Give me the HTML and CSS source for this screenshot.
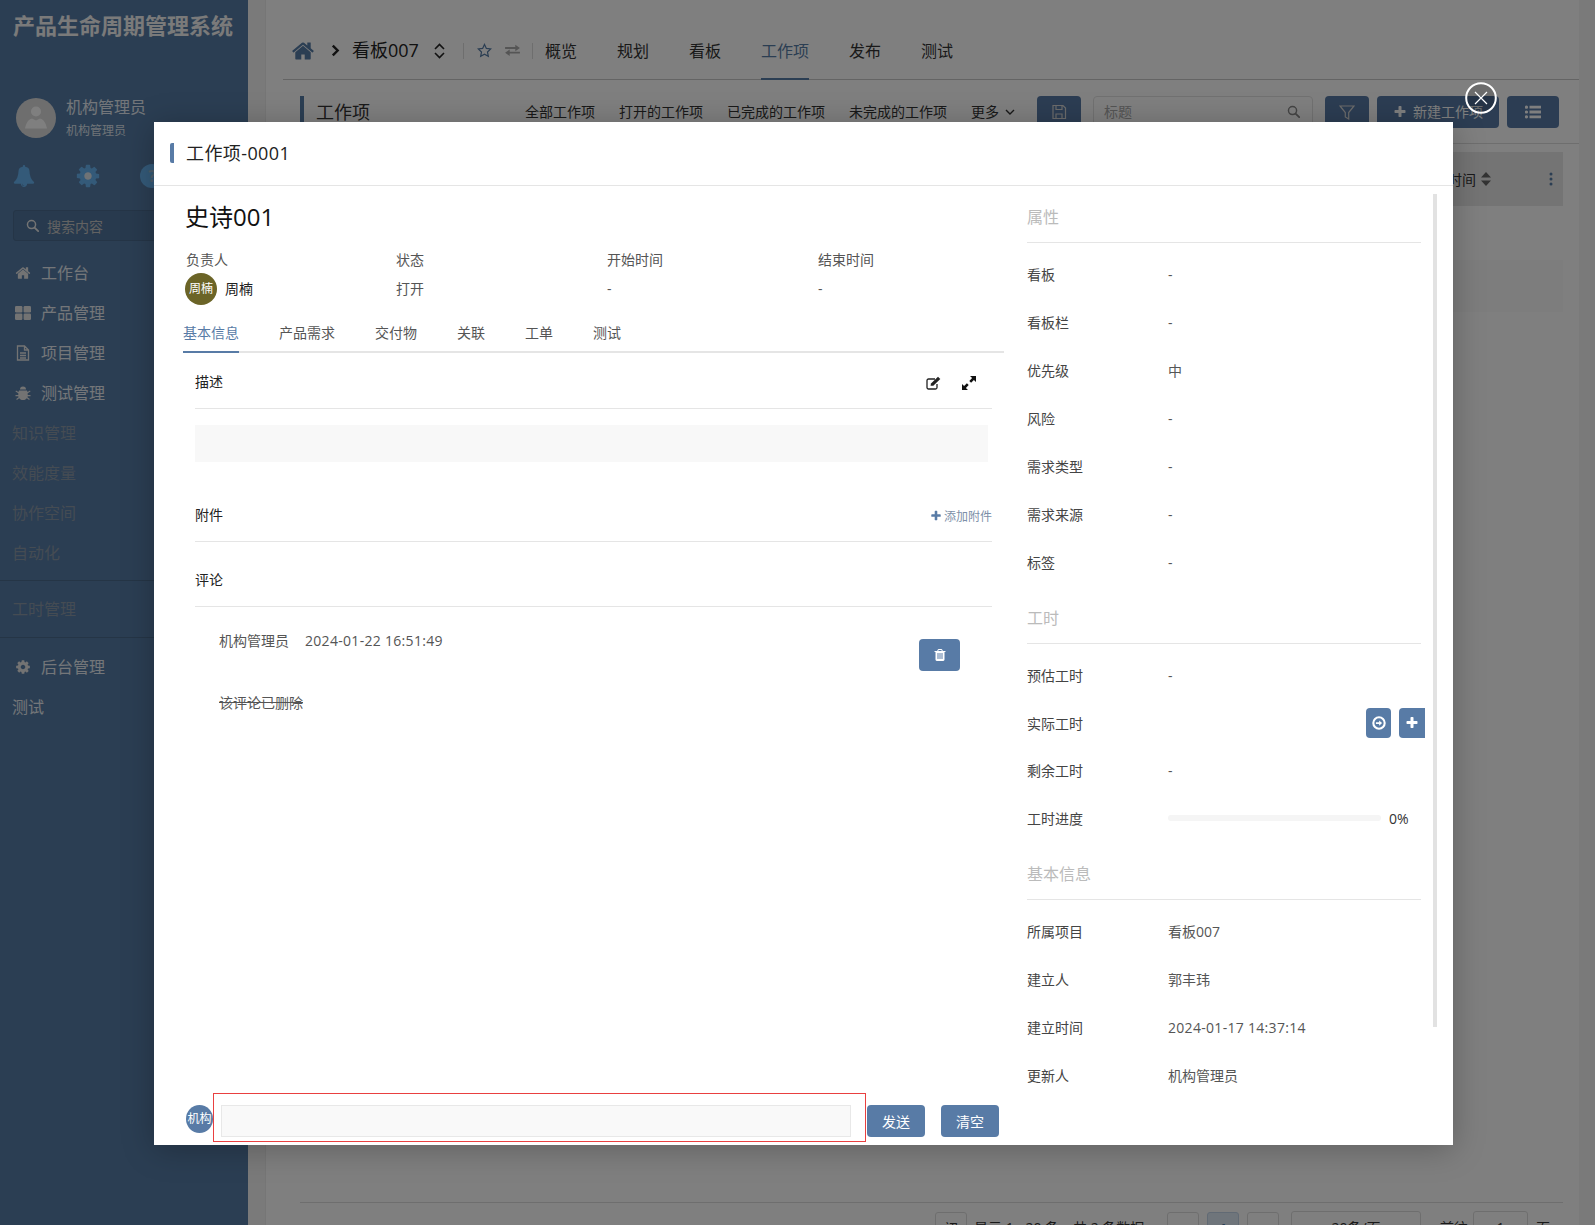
FILE: index.html
```html
<!DOCTYPE html>
<html lang="zh-CN">
<head>
<meta charset="utf-8">
<title>工作项-0001</title>
<link rel="stylesheet" href="styles.css">
</head>
<body>
<svg class="defs" aria-hidden="true">
  <symbol id="i-home" viewBox="0 0 1792 1792"><path d="M1472 992v480q0 26-19 45t-45 19h-384v-384h-256v384h-384q-26 0-45-19t-19-45v-480q0-1 .5-3t.5-3l575-474 575 474q1 2 1 6zm223-69l-62 74q-8 9-21 11h-3q-13 0-21-7l-692-577-692 577q-12 8-24 7-13-2-21-11l-62-74q-8-10-7-23.500t11-21.500l719-599q32-26 76-26t76 26l244 204v-195q0-14 9-23t23-9h192q14 0 23 9t9 23v408l219 182q10 8 11 21.500t-7 23.500z"/></symbol>
  <symbol id="i-cog" viewBox="0 0 1792 1792"><path d="M1152 896q0-106-75-181t-181-75-181 75-75 181 75 181 181 75 181-75 75-181zm512-109v222q0 12-8 23t-20 13l-185 28q-19 54-39 91 35 50 107 138 10 12 10 25t-9 23q-27 37-99 108t-94 71q-12 0-26-9l-138-108q-44 23-91 38-16 136-29 186-7 28-36 28h-222q-14 0-24.500-8.500t-11.500-21.500l-28-184q-49-16-90-37l-141 107q-10 9-25 9-14 0-25-11-126-114-165-168-7-10-7-23 0-12 8-23 15-21 51-66.500t54-70.500q-27-50-41-99l-183-27q-13-2-21-12.500t-8-23.500v-222q0-12 8-23t19-13l186-28q14-46 39-92-40-57-107-138-10-12-10-24 0-10 9-23 26-36 98.500-107.500t94.500-71.500q13 0 26 10l138 107q44-23 91-38 16-136 29-186 7-28 36-28h222q14 0 24.500 8.500t11.500 21.500l28 184q49 16 90 37l142-107q9-9 24-9 13 0 25 10 129 119 165 170 7 8 7 22 0 12-8 23-15 21-51 66.500t-54 70.500q26 50 41 98l183 28q13 2 21 12.500t8 23.500z"/></symbol>
  <symbol id="i-bell" viewBox="0 0 1792 1792"><path d="M912 1696q0-16-16-16-59 0-101.500-42.500t-42.500-101.500q0-16-16-16t-16 16q0 73 51.500 124.500t124.500 51.500q16 0 16-16zm816-288q0 52-38 90t-90 38h-448q0 106-75 181t-181 75-181-75-75-181h-448q-52 0-90-38t-38-90q190-161 287-397.500t97-498.500q0-165 96-262t264-117q-8-18-8-37 0-40 28-68t68-28 68 28 28 68q0 19-8 37 168 20 264 117t96 262q0 262 97 498.500t287 397.500z"/></symbol>
  <symbol id="i-plus" viewBox="0 0 1792 1792"><path d="M1600 736v192q0 40-28 68t-68 28h-416v416q0 40-28 68t-68 28h-192q-40 0-68-28t-28-68v-416h-416q-40 0-68-28t-28-68v-192q0-40 28-68t68-28h416v-416q0-40 28-68t68-28h192q40 0 68 28t28 68v416h416q40 0 68 28t28 68z"/></symbol>
  <symbol id="i-trash" viewBox="0 0 1792 1792"><path d="M704 1376v-704q0-14-9-23t-23-9h-64q-14 0-23 9t-9 23v704q0 14 9 23t23 9h64q14 0 23-9t9-23zm256 0v-704q0-14-9-23t-23-9h-64q-14 0-23 9t-9 23v704q0 14 9 23t23 9h64q14 0 23-9t9-23zm256 0v-704q0-14-9-23t-23-9h-64q-14 0-23 9t-9 23v704q0 14 9 23t23 9h64q14 0 23-9t9-23zm-544-992h448l-48-117q-7-9-17-11h-317q-10 2-17 11zm928 32v64q0 14-9 23t-23 9h-96v948q0 83-47 143.500t-113 60.500h-832q-66 0-113-58.500t-47-141.500v-952h-96q-14 0-23-9t-9-23v-64q0-14 9-23t23-9h309l70-167q15-37 54-63t79-26h320q40 0 79 26t54 63l70 167h309q14 0 23 9t9 23z"/></symbol>
  <symbol id="i-search" viewBox="0 0 16 16"><circle cx="6.800" cy="6.800" r="5" fill="none" stroke="currentColor" stroke-width="1.800"/><path d="M10.500 10.500 15 15" stroke="currentColor" stroke-width="2.200" stroke-linecap="round"/></symbol>
</svg>

<div class="page">
  <aside class="sidebar">
    <h1 class="brand">产品生命周期管理系统</h1>
    <div class="user">
      <svg class="user-avatar" viewBox="0 0 40 40"><circle cx="20" cy="20" r="20" fill="#dcdcdc"/><circle cx="20" cy="13.500" r="5" fill="#fff"/><path d="M9 30.500c1-5 3-9 7-10l4 2 4-2c4 1 6 5 7 10z" fill="#fff"/></svg>
      <div>
        <div class="user-name">机构管理员</div>
        <div class="user-role">机构管理员</div>
      </div>
    </div>
    <div class="quick">
      <svg class="quick-bell"><use href="#i-bell"/></svg>
      <svg class="quick-cog" viewBox="0 0 1792 1792"><circle cx="896" cy="896" r="300" fill="#dfe6ec"/><use href="#i-cog" width="1792" height="1792"/></svg>
      <span class="quick-help">?</span>
    </div>
    <div class="side-search">
      <svg class="side-search-icon"><use href="#i-search"/></svg>
      <span>搜索内容</span>
    </div>
    <nav class="menu">
      <a class="menu-item"><svg class="menu-icon"><use href="#i-home"/></svg>工作台</a>
      <a class="menu-item"><svg class="menu-icon" viewBox="0 0 16 14"><rect width="7.400" height="6.400" rx="1.200"/><rect x="8.600" width="7.400" height="6.400" rx="1.200"/><rect y="7.600" width="7.400" height="6.400" rx="1.200"/><rect x="8.600" y="7.600" width="7.400" height="6.400" rx="1.200"/></svg>产品管理</a>
      <a class="menu-item"><svg class="menu-icon" viewBox="0 0 16 16"><path d="M2.500 1h7l4 4v10h-11zM9.500 1v4h4M5 8h6M5 10.500h6M5 13h6" fill="none" stroke="currentColor" stroke-width="1.300"/></svg>项目管理</a>
      <a class="menu-item"><svg class="menu-icon" viewBox="0 0 16 16"><path d="M5 4.500a3 3 0 0 1 6 0zM4 5.500h8l.5 1.500L15 5.500l.5 1-2.800 1.800V10H15.500v1.200h-2.800l-.2 1 2.300 1.800-.7 1-2.300-1.800C10.800 14.500 9.500 15 8 15s-2.800-.5-3.800-1.800L1.900 15l-.7-1 2.300-1.800-.2-1H.5V10h2.800V8.300L.5 6.500l.5-1L3.500 7z"/></svg>测试管理</a>
      <a class="menu-item is-off">知识管理</a>
      <a class="menu-item is-off">效能度量</a>
      <a class="menu-item is-off">协作空间</a>
      <a class="menu-item is-off">自动化</a>
      <div class="menu-sep"></div>
      <a class="menu-item is-off menu-item-solo">工时管理</a>
      <div class="menu-sep menu-sep-b"></div>
      <a class="menu-item menu-item-after"><svg class="menu-icon"><use href="#i-cog"/></svg>后台管理</a>
      <a class="menu-item is-plain">测试</a>
    </nav>
  </aside>

  <main class="main">
    <div class="panel">
      <header class="topbar">
        <svg class="top-home"><use href="#i-home"/></svg>
        <svg class="top-chev" viewBox="0 0 8 12"><path d="M1.500 1.500 6 6l-4.500 4.500" fill="none" stroke="currentColor" stroke-width="2.200"/></svg>
        <span class="top-board">看板007</span>
        <svg class="top-updown" viewBox="0 0 12 16"><path d="M1.500 6 6 1.500 10.500 6M1.500 10 6 14.500 10.500 10" fill="none" stroke="currentColor" stroke-width="1.600"/></svg>
        <span class="top-div"></span>
        <svg class="top-star" viewBox="0 0 16 16"><path d="m8 1.500 2 4.300 4.600.6-3.400 3.200.9 4.700L8 12l-4.100 2.300.9-4.700L1.400 6.400 6 5.800z" fill="none" stroke="currentColor" stroke-width="1.300"/></svg>
        <svg class="top-swap" viewBox="0 0 16 14"><path d="M0 3.500h11V1l5 3.500-5 3.500V5.500H0zM16 8.500H5V6L0 9.500 5 13v-2.500h11z" transform="translate(0 -.2)"/></svg>
        <span class="top-div top-div-b"></span>
        <nav class="top-tabs">
          <a class="top-tab">概览</a>
          <a class="top-tab">规划</a>
          <a class="top-tab">看板</a>
          <a class="top-tab is-active">工作项</a>
          <a class="top-tab">发布</a>
          <a class="top-tab">测试</a>
        </nav>
      </header>

      <div class="toolbar">
        <h2 class="page-title">工作项</h2>
        <div class="views">
          <a>全部工作项</a><a>打开的工作项</a><a>已完成的工作项</a><a>未完成的工作项</a>
          <a class="views-more">更多<svg class="more-chev" viewBox="0 0 10 6"><path d="M1 1l4 4 4-4" fill="none" stroke="currentColor" stroke-width="1.400"/></svg></a>
        </div>
        <button class="btn btn-icon"><svg class="btn-svg" viewBox="0 0 16 16"><path d="M2 1.500h10l2.500 2.500v10.500H2zM5 1.500v4h6v-4M5 14.500V10h6v4.500" fill="none" stroke="currentColor" stroke-width="1.200"/></svg></button>
        <div class="search"><span class="search-ph">标题</span><svg class="search-icon"><use href="#i-search"/></svg></div>
        <button class="btn btn-icon"><svg class="btn-svg" viewBox="0 0 16 16"><path d="M1 2h14L9.700 8.500V15l-3.400-2V8.500z" fill="none" stroke="currentColor" stroke-width="1.200"/></svg></button>
        <button class="btn btn-new"><svg class="btn-plus"><use href="#i-plus"/></svg><span class="btn-new-text">新建工作项</span></button>
        <button class="btn btn-list"><svg class="btn-svg btn-svg-list" viewBox="0 0 16 14"><path d="M4.500 .8H16v2.800H4.500zM4.500 5.600H16v2.800H4.500zM4.500 10.400H16v2.800H4.500z"/><circle cx="1.500" cy="2.200" r="1.600"/><circle cx="1.500" cy="7" r="1.600"/><circle cx="1.500" cy="11.800" r="1.600"/></svg></button>
      </div>

      <div class="content">
        <div class="thead">
          <span class="thead-text">更新时间</span>
          <svg class="sort" viewBox="0 0 10 14"><path d="M5 0l5 5.500H0zM5 14l5-5.500H0z"/></svg>
          <svg class="kebab" viewBox="0 0 4 14"><circle cx="2" cy="2" r="1.500"/><circle cx="2" cy="7" r="1.500"/><circle cx="2" cy="12" r="1.500"/></svg>
        </div>
        <div class="trow"></div>
        <footer class="pager">
          <span class="pg-box pg-first">初</span>
          <span class="pg-info">显示 1 - 20 条，共 2 条数据</span>
          <span class="pg-box">‹</span>
          <span class="pg-box is-current">1</span>
          <span class="pg-box">›</span>
          <span class="pg-select">20条/页</span>
          <span class="pg-go">前往</span>
          <span class="pg-input">1</span>
          <span class="pg-unit">页</span>
        </footer>
      </div>
    </div>
  </main>
</div>

<div class="overlay"></div>

<section class="modal">
  <header class="modal-head"><h2 class="modal-title">工作项-0001</h2></header>
  <div class="modal-body">
    <div class="detail">
      <h3 class="detail-title">史诗001</h3>
      <div class="facts">
        <div class="fact-label">负责人</div><div class="fact-label">状态</div><div class="fact-label">开始时间</div><div class="fact-label">结束时间</div>
        <div class="fact-value fact-owner"><span class="owner-avatar">周楠</span><span class="owner-name">周楠</span></div>
        <div class="fact-value">打开</div><div class="fact-value">-</div><div class="fact-value">-</div>
      </div>
      <nav class="tabs">
        <a class="tab is-active">基本信息</a><a class="tab">产品需求</a><a class="tab">交付物</a><a class="tab">关联</a><a class="tab">工单</a><a class="tab">测试</a>
      </nav>
      <div class="sections">
        <div class="sec-head">
          <span>描述</span>
          <span class="sec-tools">
            <svg class="tool" viewBox="0 0 16 14"><path d="M11 8v3.500a1.500 1.500 0 0 1-1.500 1.500h-7A1.500 1.500 0 0 1 1 11.500v-7A1.500 1.500 0 0 1 2.500 3H9" fill="none" stroke="#222" stroke-width="1.300"/><path d="M4.500 9.800 5 7.500 12 .7l2.300 2.300-7 6.800z" fill="#222"/></svg>
            <svg class="tool tool-b" viewBox="0 0 14 14"><path d="M8 0h6v6l-2.100-2.100-2.800 2.800-1.800-1.800 2.800-2.800zM6 14H0V8l2.100 2.100 2.800-2.800 1.800 1.800-2.800 2.800z" fill="#111"/></svg>
          </span>
        </div>
        <div class="desc-box"></div>
        <div class="sec-head sec-attach">
          <span>附件</span>
          <a class="add-link"><svg class="add-plus"><use href="#i-plus"/></svg>添加附件</a>
        </div>
        <div class="sec-head sec-comment"><span>评论</span></div>
        <article class="comment">
          <div class="comment-main">
            <div class="comment-meta"><span>机构管理员</span><span class="latin-wide">2024-01-22 16:51:49</span></div>
            <div class="comment-text">该评论已删除</div>
          </div>
          <button class="btn-del"><svg class="del-icon"><use href="#i-trash"/></svg></button>
        </article>
      </div>
      <div class="reply">
        <span class="reply-avatar">机构</span>
        <div class="reply-frame"><div class="reply-input"></div></div>
        <button class="btn-reply">发送</button>
        <button class="btn-reply btn-clear">清空</button>
      </div>
    </div>

    <aside class="attrs">
      <h4 class="attr-title">属性</h4>
      <div class="attr-list">
        <div class="attr"><span class="attr-k">看板</span><span>-</span></div>
        <div class="attr"><span class="attr-k">看板栏</span><span>-</span></div>
        <div class="attr"><span class="attr-k">优先级</span><span>中</span></div>
        <div class="attr"><span class="attr-k">风险</span><span>-</span></div>
        <div class="attr"><span class="attr-k">需求类型</span><span>-</span></div>
        <div class="attr"><span class="attr-k">需求来源</span><span>-</span></div>
        <div class="attr"><span class="attr-k">标签</span><span>-</span></div>
      </div>
      <h4 class="attr-title attr-title-next">工时</h4>
      <div class="attr-list">
        <div class="attr"><span class="attr-k">预估工时</span><span>-</span></div>
        <div class="attr attr-tight"><span class="attr-k">实际工时</span>
          <span class="hour-btns">
            <button class="hour-btn"><svg viewBox="0 0 16 16" class="hour-svg"><circle cx="8" cy="8" r="6.500" fill="none" stroke="currentColor" stroke-width="2.400"/><path d="M4.500 7h3.700V5l3.300 3-3.300 3V9H4.500z" fill="currentColor"/></svg></button>
            <button class="hour-btn hour-btn-cut"><svg class="hour-svg"><use href="#i-plus"/></svg></button>
          </span>
        </div>
        <div class="attr"><span class="attr-k">剩余工时</span><span>-</span></div>
        <div class="attr"><span class="attr-k">工时进度</span><span class="bar"></span><span class="bar-val">0%</span></div>
      </div>
      <h4 class="attr-title attr-title-next">基本信息</h4>
      <div class="attr-list">
        <div class="attr"><span class="attr-k">所属项目</span><span>看板007</span></div>
        <div class="attr"><span class="attr-k">建立人</span><span>郭丰玮</span></div>
        <div class="attr"><span class="attr-k">建立时间</span><span class="latin-wide">2024-01-17 14:37:14</span></div>
        <div class="attr"><span class="attr-k">更新人</span><span>机构管理员</span></div>
      </div>
    </aside>
    <div class="scroll-thumb"></div>
  </div>
</section>

<button class="modal-close"><svg viewBox="0 0 32 32" class="close-svg"><circle cx="16" cy="16" r="14.800" fill="rgba(0,0,0,.15)" stroke="#fff" stroke-width="2"/><path d="M10 10l12 12M22 10 10 22" stroke="#fff" stroke-width="1.200"/></svg></button>
</body>
</html>
```

FILE: styles.css
```css
* { box-sizing: border-box; }
html, body { margin: 0; height: 100%; overflow: hidden; }
body {
  font-family: "Open Sans", "Noto Sans CJK SC", sans-serif;
  font-size: 14px;
  color: #333;
  background: #fff;
}
h1, h2, h3, h4 { margin: 0; font-weight: 400; }
button { font-family: inherit; border: 0; padding: 0; }
svg { fill: currentColor; display: block; }
.defs { position: absolute; width: 0; height: 0; }

.page { display: flex; height: 1225px; overflow: hidden; }

/* sidebar */
.sidebar { width: 248px; flex: none; background: #567ca6; color: #ffffff; overflow: hidden; }
.brand { font-size: 22px; font-weight: 700; line-height: 30px; padding: 10px 0 0 13px; color: #f4f4f4; white-space: nowrap; }
.user { display: flex; align-items: center; gap: 10px; margin: 57px 0 0 16px; }
.user-avatar { width: 40px; height: 40px; }
.user-name { font-size: 16px; line-height: 20px; color: #e6edf4; }
.user-role { font-size: 12px; line-height: 16px; margin-top: 6px; color: #dfe6ee; }
.quick { display: flex; align-items: center; margin: 24px 0 0 14px; }
.quick-bell { width: 22px; height: 24px; color: #68b4f2; margin-left: -1px; }
.quick-cog { width: 26px; height: 26px; color: #68b4f2; margin-left: 40px; }
.quick-help { width: 24px; height: 24px; border-radius: 50%; background: #68b4f2; color: #9cbcd8; margin-left: 39px; text-align: center; line-height: 24px; font-weight: 700; font-size: 16px; }
.side-search { display: flex; align-items: center; gap: 8px; height: 31px; margin: 21px 0 0 13px; padding-left: 12px; background: #51759c; border: 1px solid #4a6a8e; border-radius: 3px; color: #c4c4c4; font-size: 14px; }
.side-search-icon { width: 13px; height: 13px; color: #e8e8e8; }
.menu { margin-top: 12px; }
.menu-item { display: flex; align-items: center; height: 40px; padding: 0 0 3px 15px; font-size: 16px; color: #e8edf2; }
.menu-icon { width: 16px; height: 16px; margin: 2px 10px 0 0; flex: none; color: #e6e6e6; }
.menu-item.is-off { padding-left: 12px; color: #8a98a6; }
.menu-item-solo { margin-top: 9px; height: 38px; }
.menu-item-after { margin-top: 9px; }
.menu-item.is-plain { padding-left: 12px; }
.menu-sep { height: 1px; background: #4b6a8d; margin-top: 7px; }
.menu-sep-b { margin-top: 9px; }

/* main behind the dialog */
.main { flex: 1; min-width: 0; padding: 0 16px 0 17px; background: #f4f4f4; overflow: hidden; }
.panel { background: #fff; height: 100%; border-left: 1px solid #ececec; }
.topbar { display: flex; align-items: center; height: 80px; padding: 22px 0 0 8px; margin-left: 17px; border-bottom: 1px solid #c8c8c8; color: #222; }
.top-home { width: 24px; height: 24px; color: #567ca6; }
.top-chev { width: 9px; height: 13px; margin-left: 16px; color: #222; }
.top-board { font-size: 18px; margin-left: 12px; margin-bottom: 4px; width: 67px; white-space: nowrap; }
.top-updown { width: 13px; height: 16px; margin-left: 14px; color: #222; }
.top-div { width: 1px; height: 16px; background: #ddd; margin-left: 17px; }
.top-star { width: 15px; height: 15px; margin-left: 13px; color: #567ca6; }
.top-swap { width: 15px; height: 13px; margin-left: 13px; color: #aaa; }
.top-div-b { margin-left: 12px; }
.top-tabs { display: flex; gap: 40px; margin-left: 12px; align-self: stretch; }
.top-tab { font-size: 16px; display: flex; align-items: center; color: #333; border-bottom: 2px solid transparent; margin-bottom: -1px; }
.top-tab.is-active { color: #567ca6; border-bottom-color: #567ca6; }

.toolbar { display: flex; align-items: center; height: 64px; margin-left: 17px; padding: 0 20px 0 17px; border-bottom: 1px solid #ddd; }
.page-title { font-size: 18px; padding-left: 12px; border-left: 4px solid #567ca6; line-height: 32px; color: #333; margin-top: 0; }
.views { display: flex; align-items: center; gap: 24px; margin: -2px 22px 0 auto; font-size: 14px; color: #333; }
.views-more { display: flex; align-items: center; gap: 6px; }
.more-chev { width: 10px; height: 6px; margin-top: 2px; }
.btn { display: flex; align-items: center; justify-content: center; height: 32px; background: #587ba6; color: #fff; border-radius: 4px; font-size: 14px; }
.btn-icon { width: 44px; }
.btn-svg { width: 16px; height: 16px; color: #d8d8d8; }
.btn-svg-list { color: #fff; height: 14px; }
.search { display: flex; align-items: center; justify-content: space-between; width: 220px; height: 32px; margin: 0 12px; padding: 0 12px 0 10px; border: 1px solid #e2e2e2; border-radius: 4px; color: #aaa; }
.search-ph { margin-top: -2px; }
.search-icon { width: 13px; height: 13px; color: #888; }
.btn-new { width: 122px; margin-left: 8px; gap: 6px; }
.btn-new-text { margin-top: -2px; }
.btn-plus { width: 14px; height: 14px; }
.btn-list { width: 52px; margin-left: 8px; }

.content { margin-left: 34px; margin-right: 16px; }
.thead { display: flex; align-items: center; justify-content: flex-end; height: 54px; margin-top: 8px; background: #e8e8e8; padding-right: 10px; color: #333; }
.sort { width: 10px; height: 14px; margin: 0 58px 0 5px; color: #666; }
.kebab { width: 4px; height: 14px; color: #567ca6; }
.trow { height: 52px; margin-top: 54px; background: #fbfbfb; }
.pager { display: flex; align-items: flex-start; justify-content: flex-end; height: 56px; margin-top: 890px; border-top: 1px solid #ddd; padding: 9px 13px 0 0; font-size: 14px; color: #333; white-space: nowrap; }
.pg-box { display: flex; align-items: center; justify-content: center; width: 32px; height: 32px; border: 1px solid #ddd; border-radius: 3px; margin-right: 8px; }
.pg-box.is-current { background: #deebf7; border-color: #c2d4e8; color: #567ca6; font-weight: 700; }
.pg-first { margin-right: 7px; }
.pg-info { width: 193px; line-height: 32px; }
.pg-select { width: 130px; height: 34px; margin: -1px 0 0 4px; border: 1px solid #ddd; border-radius: 3px; text-align: center; line-height: 32px; }
.pg-go { margin-left: 19px; line-height: 32px; }
.pg-input { width: 55px; height: 34px; margin: -1px 0 0 5px; border: 1px solid #ddd; border-radius: 3px; text-align: center; line-height: 32px; }
.pg-unit { margin-left: 8px; line-height: 32px; }

/* dim layer */
.overlay { position: absolute; inset: 0; background: rgba(0, 0, 0, .5); }

/* dialog */
.modal { position: absolute; left: 154px; top: 122px; width: 1299px; height: 1023px; background: #fff; display: flex; flex-direction: column; box-shadow: 0 4px 30px rgba(0, 0, 0, .25); }
.modal-head { height: 64px; flex: none; border-bottom: 1px solid #e5e5e5; padding: 21px 0 0 16px; }
.modal-title { font-size: 18px; line-height: 20px; padding-left: 12px; border-left: 4px solid #587ba6; color: #222; border-radius: 2px; letter-spacing: .4px; }
.modal-body { flex: 1; min-height: 0; display: flex; }

.detail { width: 850px; flex: none; padding-left: 29px; display: flex; flex-direction: column; }
.detail-title { font-size: 24px; line-height: 32px; margin: 15px 0 0 2px; color: #111; }
.facts { display: grid; grid-template-columns: 210px 211px 211px 185px; margin: 17px 0 0 3px; }
.fact-label { font-size: 14px; line-height: 20px; color: #555; }
.fact-value { display: flex; align-items: center; height: 32px; margin-top: 3px; padding-bottom: 2px; color: #555; }
.fact-owner { margin-left: -1px; padding-bottom: 0; color: #222; }
.owner-avatar { width: 32px; height: 32px; border-radius: 50%; background: #6b6427; color: #fff; font-size: 12px; text-align: center; line-height: 32px; }
.owner-name { margin: -2px 0 0 8px; }

.tabs { display: flex; gap: 40px; height: 48px; border-bottom: 2px solid #e5e5e5; }
.tab { height: 48px; padding-top: 18px; line-height: 20px; font-size: 14px; color: #555; border-bottom: 2px solid transparent; }
.tab.is-active { color: #587ba6; border-bottom-color: #587ba6; }

.sections { flex: 1; min-height: 0; padding: 0 12px; }
.sec-head { display: flex; align-items: center; justify-content: space-between; height: 56px; border-bottom: 1px solid #e5e5e5; color: #222; }
.sec-tools { display: flex; align-items: center; gap: 20px; margin: 4px 16px 0 0; }
.tool { width: 16px; height: 14px; }
.tool-b { width: 14px; height: 14px; }
.desc-box { height: 37px; margin: 16px 4px 0 0; background: #f8f8f8; }
.sec-attach { margin-top: 24px; }
.sec-comment { margin-top: 9px; }
.add-link { display: flex; align-items: center; gap: 2px; font-size: 12px; color: #7d8fa8; margin-top: 4px; }
.add-plus { width: 12px; height: 12px; color: #587ba6; }
.comment { display: flex; justify-content: space-between; padding: 24px 32px 0 24px; }
.comment-meta { display: flex; gap: 16px; line-height: 20px; color: #555; }
.latin-wide { letter-spacing: .3px; }
.comment-text { margin-top: 42px; line-height: 20px; color: #555; text-decoration: line-through; }
.btn-del { display: flex; align-items: center; justify-content: center; width: 41px; height: 32px; margin-top: 8px; background: #587ba6; border-radius: 4px; color: #fff; }
.del-icon { width: 14px; height: 14px; }

.reply { display: flex; align-items: flex-start; height: 52px; flex: none; padding-left: 3px; }
.reply-avatar { width: 27px; height: 28px; margin-top: 12px; border-radius: 50%; background: #587ba6; color: #fff; font-size: 12px; line-height: 28px; text-align: center; white-space: nowrap; flex: none; }
.reply-frame { width: 653px; height: 49px; padding: 11px 14px 0 7px; border: 1px solid #e94040; flex: none; }
.reply-input { height: 32px; background: #f9f9f9; border: 1px solid #e8e8e8; }
.btn-reply { width: 58px; height: 32px; margin: 12px 0 0 1px; background: #587ba6; color: #fff; border-radius: 4px; font-size: 14px; }
.btn-clear { width: 58px; margin-left: 16px; }

.attrs { width: 394px; flex: none; margin-left: 23px; height: 904px; color: #555; }
.attr-title { font-size: 16px; line-height: 20px; padding: 21px 0 15px; border-bottom: 1px solid #e5e5e5; color: #bbb; }
.attr-title-next { padding-top: 0; margin-top: 21px; }
.attr-list { margin-top: 8px; }
.attr { display: flex; align-items: center; height: 48px; padding-bottom: 2px; }
.attr-tight { height: 47px; }
.attr-k { width: 141px; flex: none; color: #444; }
.hour-btns { display: flex; gap: 8px; margin: 0 -4px 0 auto; }
.hour-btn { display: flex; align-items: center; justify-content: center; width: 25px; height: 30px; background: #587ba6; border-radius: 4px; color: #fff; }
.hour-btn-cut { width: 26px; border-radius: 4px 0 0 4px; }
.hour-svg { width: 14px; height: 14px; }
.bar { width: 213px; height: 6px; border-radius: 3px; background: #f5f5f5; }
.bar-val { margin-left: 8px; color: #333; }
.scroll-thumb { width: 4px; height: 833px; margin: 8px 0 0 12px; background: #e2e2e2; flex: none; }

.modal-close { position: absolute; left: 1465px; top: 82px; width: 32px; height: 32px; background: none; }
.close-svg { width: 32px; height: 32px; }
```
